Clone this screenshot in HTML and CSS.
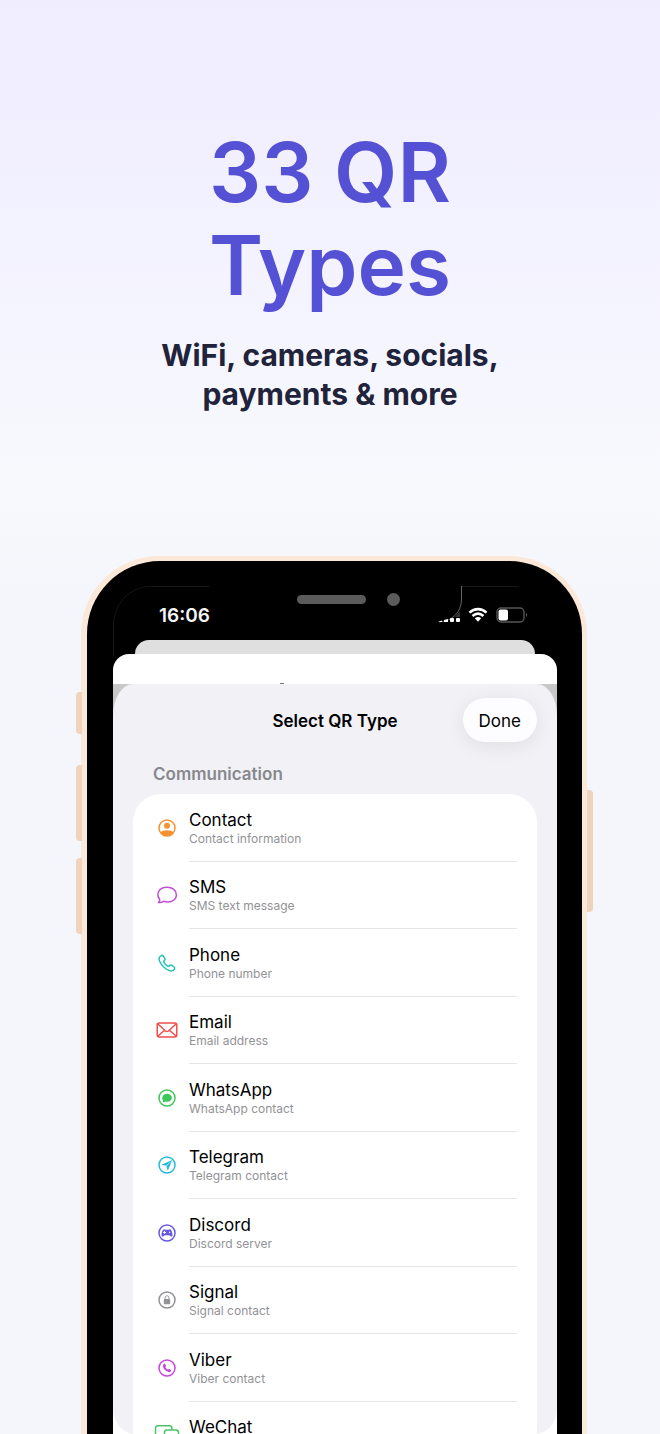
FILE: index.html
```
<!DOCTYPE html>
<html lang="en">
<head>
<meta charset="utf-8">
<meta name="viewport" content="width=device-width, initial-scale=1">
<title>33 QR Types</title>
<link rel="stylesheet" href="styles.css">
</head>
<body>
<main class="poster">
  <header class="intro">
    <h1 class="headline">33 QR<br>Types</h1>
    <p class="tagline">WiFi, cameras, socials,<br>payments &amp; more</p>
  </header>
  <div class="stage">
    <div class="phone">
      <span class="key key-mute"></span>
      <span class="key key-up"></span>
      <span class="key key-down"></span>
      <span class="key key-power"></span>
      <div class="bezel">
        <div class="screen">
          <svg class="outline" viewBox="0 0 444 70" aria-hidden="true">
            <path d="M.5 70V40C.5 17 17 .5 38 .5H96M348.500 .5H405"/>
            <path class="cutout" d="M348.500 0V14C348 26 340 35 326 36"/>
          </svg>
          <div class="status">
            <span class="time">16:06</span>
            <span class="notch"><span class="speaker"></span><span class="camera"></span></span>
            <svg class="indicators" width="90" height="20" viewBox="0 0 90 20" role="img" aria-label="Signal, Wi-Fi and battery">
              <g fill="#fff"><path d="M0 16 4 14.500V16ZM6 16V14L10 13V16Z"/><rect x="12" y="12" width="4" height="4" rx="1"/><rect x="18" y="12" width="4" height="4" rx="1"/></g>
              <path d="M17 11 22 5V11Z" fill="#333"/>
              <g fill="none" stroke="#fff" stroke-width="2.600"><path d="M31.500 6.600C36.500 1.900 43.500 1.900 48.500 6.600"/><path d="M34.500 10C38 6.900 42 6.900 45.500 10"/></g>
              <path d="M36.800 12.300Q40 9.800 43.200 12.300L40 15.800Z" fill="#fff"/>
              <rect x="59" y="2" width="27" height="14" rx="4" fill="none" stroke="#555" stroke-width="1.400"/>
              <rect x="60.500" y="3.500" width="9.500" height="11" rx="2" fill="#fff"/>
              <path d="M88 7Q90 9 88 11Z" fill="#666"/>
            </svg>
          </div>
          <div class="sheet-far"></div>
          <div class="sheet-near"><span></span></div>
          <div class="backdrop">
            <section class="modal">
              <div class="modal-head">
                <h2>Select QR Type</h2>
                <button type="button" class="done">Done</button>
              </div>
              <h3 class="group">Communication</h3>
              <ul class="types">
                <li><svg class="icon orange" viewBox="0 0 24 24"><circle cx="12" cy="12" r="8"/><circle class="solid" cx="12" cy="9.800" r="3"/><path class="solid" d="M5.500 16.500C7.500 13.400 16.500 13.400 18.500 16.500 15 21 9 21 5.500 16.500Z"/></svg><div class="label"><b>Contact</b><small>Contact information</small></div></li>
                <li><svg class="icon purple" viewBox="0 0 24 24"><path d="M4.700 16.300C1 11.500 3.200 4.300 12 4.300 17.600 4.300 21.400 7.300 21.400 11.700 21.400 17.300 14.800 20.500 8.800 18.300 7 19.300 5 19.700 3.400 19.500 4.500 18.500 5 17.500 4.700 16.300Z"/></svg><div class="label"><b>SMS</b><small>SMS text message</small></div></li>
                <li><svg class="icon teal" viewBox="0 0 24 24"><path d="M6.300 4.600C4 5.700 3.500 8 4.600 10.300 6.500 14.500 9.500 17.500 13.700 19.400 16 20.500 18.300 20 19.500 17.800 19.900 17.100 19.700 16.500 19.100 16L16.600 14.200C15.900 13.700 15.300 13.900 14.700 14.400L13.900 15.200C13.500 15.500 13.100 15.400 12.700 15.100 11.300 14.200 9.800 12.700 8.900 11.300 8.600 10.900 8.600 10.500 8.900 10.100L9.600 9.300C10.100 8.700 10.300 8.100 9.800 7.400L8.100 5C7.600 4.400 7 4.200 6.300 4.600Z"/></svg><div class="label"><b>Phone</b><small>Phone number</small></div></li>
                <li><svg class="icon red" viewBox="0 0 24 24"><rect x="2.200" y="5" width="19.600" height="14" rx="2"/><path d="M3 6 10.500 13Q12 14.200 13.500 13L21 6M3 18 9.500 12.200M21 18 14.500 12.200"/></svg><div class="label"><b>Email</b><small>Email address</small></div></li>
                <li><svg class="icon green" viewBox="0 0 24 24"><circle cx="12" cy="12" r="8"/><path class="solid" d="M12 7.800C14.800 7.800 16.900 9.500 16.900 11.800 16.900 14.800 13.500 16.400 10.400 15.600 9.500 16.200 8.500 16.300 7.600 16.200 8.100 15.600 8.300 15 8 14.400 6 11.500 8.300 7.800 12 7.800Z"/></svg><div class="label"><b>WhatsApp</b><small>WhatsApp contact</small></div></li>
                <li><svg class="icon cyan" viewBox="0 0 24 24"><circle cx="12" cy="12" r="8"/><path class="solid" d="M17.200 7 6.300 11.700 11 12.800ZM17.200 7 11.400 13.200 12.800 17.700Z"/></svg><div class="label"><b>Telegram</b><small>Telegram contact</small></div></li>
                <li><svg class="icon indigo" viewBox="0 0 24 24"><circle cx="12" cy="12" r="8"/><path class="solid" fill-rule="evenodd" d="M9 8.200Q12 9.200 15 8.200C16.600 8.500 17.500 12 17.500 14.500 17.200 16.200 15.500 15.800 14.300 14.200H9.700C8.500 15.800 6.800 16.200 6.500 14.500 6.500 12 7.400 8.500 9 8.200ZM9 10V10.900H8.100V11.900H9V12.800H10V11.900H10.900V10.900H10V10ZM14 10.700V11.900H15.200V10.700Z"/></svg><div class="label"><b>Discord</b><small>Discord server</small></div></li>
                <li><svg class="icon gray" viewBox="0 0 24 24"><circle cx="12" cy="12" r="8"/><rect class="solid" x="8.800" y="11" width="6.400" height="5.200" rx="1"/><path class="thin" d="M10 11.500V9.900C10 7.100 14 7.100 14 9.900V11.500"/></svg><div class="label"><b>Signal</b><small>Signal contact</small></div></li>
                <li><svg class="icon magenta" viewBox="0 0 24 24"><circle cx="12" cy="12" r="8"/><path class="solid" d="M8.600 8.200C9.300 7.500 9.700 7.600 10.200 8.300L10.900 9.300C11.400 10.100 10.300 10.600 10.400 11.100 10.700 12.200 11.700 13.200 12.800 13.600 13.400 13.700 13.800 12.600 14.600 13.100L15.800 14C16.500 14.500 16.300 15 15.700 15.600 14.800 16.500 13.300 16.200 11.500 15.100 9.600 13.900 8.400 12.100 8 10.500 7.800 9.600 8 8.800 8.600 8.200Z"/></svg><div class="label"><b>Viber</b><small>Viber contact</small></div></li>
                <li><svg class="icon wechat" viewBox="0 0 24 24"><path d="M9 14H6.500L4 16V14H3Q.5 14 .5 11.500V5.500Q.5 2.700 3 2.700H14.500Q17 2.700 17 5.500V6.500M11.500 7H21Q23.500 7 23.500 9.500V14.500Q23.500 17 21 17H20V19L17.500 17H12Q9.500 17 9.500 14.500V9.500Q9.500 7 12 7Z"/></svg><div class="label"><b>WeChat</b><small>WeChat contact</small></div></li>
              </ul>
            </section>
          </div>
        </div>
      </div>
    </div>
  </div>
</main>
</body>
</html>
```
FILE: styles.css
```
* { box-sizing: border-box; }

body {
  margin: 0;
  font-family: Inter, "Liberation Sans", sans-serif;
  color: #000;
}

.poster {
  display: flex;
  flex-direction: column;
  height: 100vh;
  overflow: hidden;
  background: linear-gradient(#f0edff, #f3f2ff 17%, #f8f9fd 34%, #f4f6fb 42%);
}

.intro {
  padding: 126px 24px 142px;
  text-align: center;
}

.headline {
  margin: 0 0 24px;
  font-size: 82px;
  line-height: 93px;
  font-weight: 600;
  color: #5551d4;
}

.tagline {
  margin: 0;
  font-size: 30px;
  line-height: 39px;
  font-weight: 700;
  color: #20233a;
}

.stage {
  display: flex;
  flex: 1;
  min-height: 0;
  padding: 0 73px 0 81px;
}

.phone {
  position: relative;
  display: flex;
  flex: 1;
  min-width: 0;
  padding: 5px 5px 0 6px;
  border-radius: 78px 78px 0 0;
  background: #fce8d8;
}

.key {
  position: absolute;
  left: -5px;
  width: 6px;
  background: #efd3bb;
  border-radius: 4px 0 0 4px;
}

.key-mute { top: 136px; height: 42px; }
.key-up { top: 209px; height: 76px; }
.key-down { top: 302px; height: 76px; }

.key-power {
  top: 234px;
  right: -6px;
  left: auto;
  height: 122px;
  border-radius: 0 4px 4px 0;
}

.bezel {
  display: flex;
  flex: 1;
  min-width: 0;
  padding: 25px 25px 0 26px;
  border-radius: 73px 73px 0 0;
  background: #000;
}

.screen {
  position: relative;
  display: flex;
  flex: 1;
  flex-direction: column;
  min-width: 0;
}

.outline {
  position: absolute;
  top: 0;
  left: 0;
  width: 100%;
  fill: none;
  stroke: #161616;
}

.outline .cutout { stroke: #666; }

.status {
  position: relative;
  display: flex;
  height: 54px;
  padding: 7px 29px 0 46px;
}

.time {
  flex: 1;
  padding-top: 11px;
  font-size: 19px;
  line-height: 24px;
  font-weight: 600;
  color: #f5f5f5;
}

.notch {
  display: flex;
  align-items: center;
  gap: 21px;
  height: 12px;
  margin-right: 38px;
}

.speaker {
  width: 69px;
  height: 9px;
  border-radius: 5px;
  background: #5b5b5b;
}

.camera {
  width: 13px;
  height: 13px;
  border-radius: 50%;
  background: #5b5b5b;
}

.indicators { margin-top: 13px; }

.sheet-far {
  height: 14px;
  margin: 0 22px;
  border-radius: 14px 14px 0 0;
  background: #dfdfdf;
}

.sheet-near {
  display: flex;
  align-items: flex-end;
  height: 30px;
  padding-left: 167px;
  border-radius: 16px 16px 0 0;
  background: #fff;
}

.sheet-near span {
  width: 4px;
  height: 1px;
  background: #777;
}

.backdrop {
  display: flex;
  flex: 1;
  min-height: 0;
  background: linear-gradient(#c8c8c8 60px, #fff 60px);
}

.modal {
  flex: 1;
  min-width: 0;
  padding: 14px 20px 0;
  overflow: hidden;
  border-radius: 20px 20px 22px 22px / 32px 32px 26px 26px;
  background: #f1f1f6;
}

.modal-head {
  display: grid;
  grid-template-columns: 1fr auto 1fr;
  align-items: center;
}

.modal-head h2 {
  grid-column: 2;
  margin: 0;
  padding-top: 2px;
  font-size: 17px;
  line-height: 22px;
  font-weight: 600;
}

.done {
  justify-self: end;
  height: 44px;
  padding: 2px 16px 0;
  border: 0;
  border-radius: 22px;
  background: #fdfdff;
  box-shadow: 0 4px 20px rgba(0, 0, 0, 0.08);
  font: inherit;
  font-size: 17px;
}

.group {
  margin: 21px 20px 9px;
  font-size: 17px;
  line-height: 22px;
  font-weight: 600;
  color: #88888d;
}

.types {
  display: grid;
  grid-auto-rows: 1fr;
  min-height: 675px;
  margin: 0;
  padding: 0 20px 0 22px;
  border-radius: 28px;
  background: #fff;
  list-style: none;
}

.types li {
  display: flex;
  align-items: center;
  gap: 10px;
}

.icon {
  width: 24px;
  height: 24px;
  overflow: visible;
  fill: none;
  stroke: currentColor;
  stroke-width: 1.5;
  stroke-linejoin: round;
}

.icon .solid { fill: currentColor; stroke: none; }
.icon .thin { stroke-width: 1; }

.orange { color: #f5922f; }
.purple { color: #c14fd8; }
.teal { color: #20c3b0; }
.red { color: #ee4f4b; }
.green { color: #3dc65a; }
.cyan { color: #23bbdc; }
.indigo { color: #6659e0; }
.gray { color: #929297; }
.magenta { color: #c944dc; }
.wechat { color: #4bc569; }

.label {
  display: flex;
  flex: 1;
  flex-direction: column;
  justify-content: center;
  align-self: stretch;
  padding-top: 3px;
  border-bottom: 1px solid #e6e6e8;
}

.label b {
  font-size: 17px;
  line-height: 20px;
  font-weight: 400;
}

.label small {
  font-size: 12px;
  line-height: 18px;
  color: #929296;
}
```
